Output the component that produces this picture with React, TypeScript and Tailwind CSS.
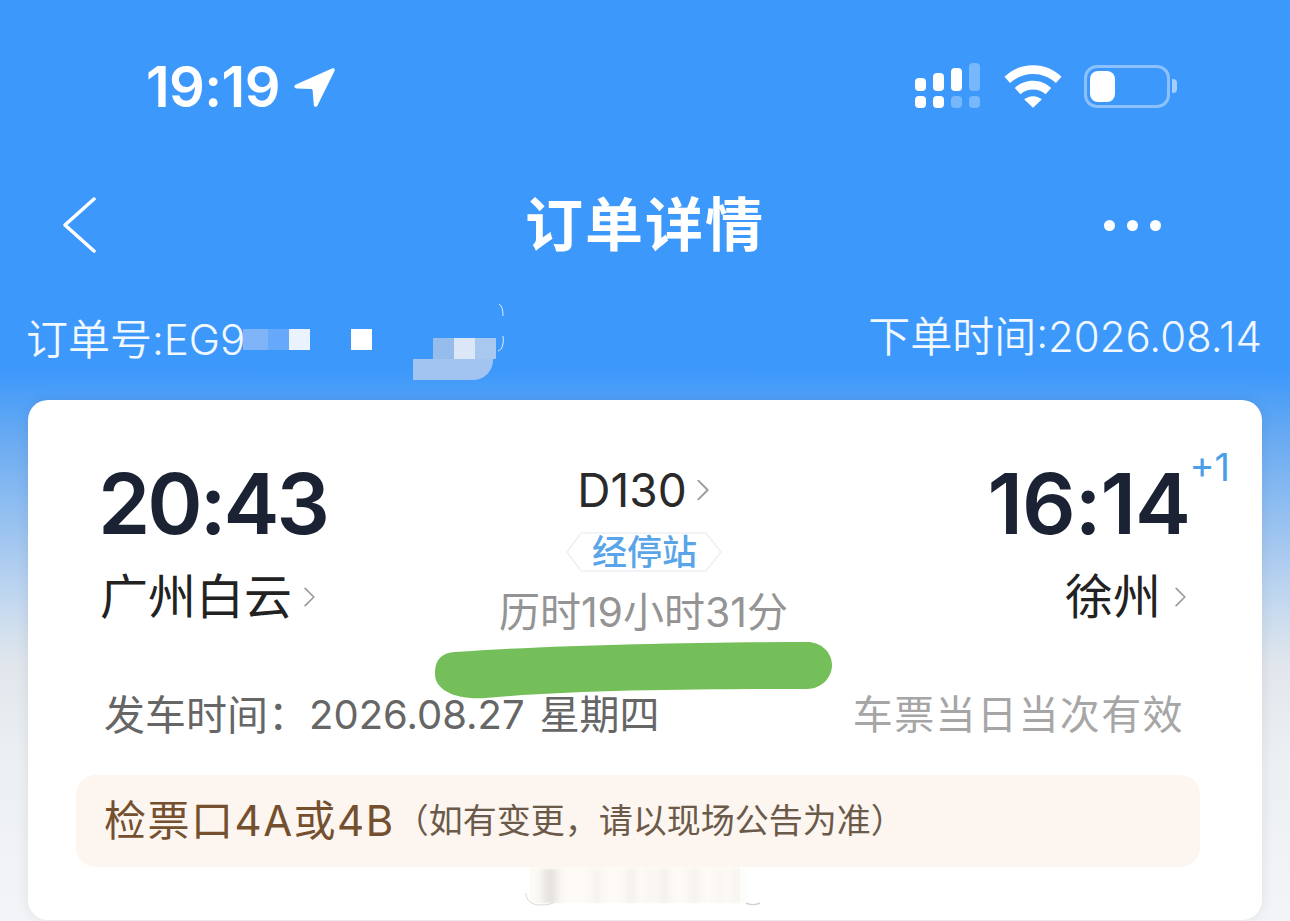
const F = '"Inter","Noto Sans CJK SC",sans-serif';

function Chevron({ className }: { className: string }) {
  return (
    <svg viewBox="0 0 12 24" className={className} fill="none" stroke="currentColor" strokeWidth="1.6" strokeLinecap="round" strokeLinejoin="round">
      <path d="M2 4l8 8-8 8" />
    </svg>
  );
}

function Status() {
  return (
    <div className="flex items-center justify-between pl-[146px] pr-[113px] pt-[62px] h-[112px]">
      <div className="flex items-center gap-[13px]">
        <span className="text-[56px] leading-[54px] font-semibold text-white tracking-[-0.6px]">19:19</span>
        <svg viewBox="0 0 42 40" className="w-[42px] h-[40px]" fill="white">
          <path d="M39 1.5 3 17.5c-2.5 1.2-2 3.8.7 3.900l14.500.5c.8 0 1.300.5 1.400 1.300l1.200 14.500c.2 2.400 2.800 2.900 3.800.6L41.500 4C42.300 2 41 .7 39 1.500Z" />
        </svg>
      </div>
      <div className="flex items-center gap-[23px] mt-[-2px]">
        <svg viewBox="0 0 66 46" className="w-[66px] h-[46px]" fill="white">
          <rect x="0" y="15" width="11" height="13" rx="4" />
          <rect x="18" y="10" width="11" height="18" rx="4" />
          <rect x="36" y="5" width="11" height="23" rx="4" />
          <rect x="54" y="0" width="11" height="28" rx="4" fillOpacity=".3" />
          <rect x="0" y="33" width="11" height="12" rx="4" />
          <rect x="18" y="33" width="11" height="12" rx="4" />
          <rect x="36" y="33" width="11" height="12" rx="4" fillOpacity=".3" />
          <rect x="54" y="33" width="11" height="12" rx="4" fillOpacity=".3" />
        </svg>
        <svg viewBox="0 0 60 44" className="w-[58px] h-[43px]" fill="white">
          <path d="M30 0C18 0 8 4.500.5 12l5.800 6.500C12.500 12.500 20.500 9 30 9s17.500 3.500 23.700 9.500L59.500 12C52 4.500 42 0 30 0Z" />
          <path d="M30 16c-7.500 0-14 2.800-18.800 7.500l5.800 6.400C20.300 26.800 25 25 30 25s9.700 1.800 13 4.900l5.800-6.400C44 18.800 37.500 16 30 16Z" />
          <path d="M30 32c-3.800 0-7 1.300-9 3.500L30 44l9-8.500C37 33.300 33.800 32 30 32Z" />
        </svg>
        <div className="flex items-center gap-[2px] ml-[-1px]">
          <div className="w-[86px] h-[43px] rounded-[13px] border-[3px] border-[#8cc1fb] p-[3px]">
            <div className="w-[25px] h-full rounded-[8px] bg-white" />
          </div>
          <div className="w-[5px] h-[14px] rounded-r-[4px] bg-[#a4cefc]" />
        </div>
      </div>
    </div>
  );
}

function Pixel({ className }: { className: string }) {
  return <span className={`block w-[21px] h-[21px] ${className}`} />;
}

function Smudge() {
  const bars = [
    [543, 14, 0.18],
    [593, 8, 0.07],
    [627, 8, 0.09],
    [647, 6, 0.06],
    [660, 8, 0.09],
    [690, 8, 0.08],
    [717, 6, 0.05],
    [733, 6, 0.07],
  ];
  return (
    <svg viewBox="0 0 260 46" className="absolute left-[492px] top-[465px] w-[260px] h-[46px]">
      <defs>
        <filter id="b" x="-100%" width="300%">
          <feGaussianBlur stdDeviation="4 1" />
        </filter>
      </defs>
      <rect x="10" y="2" width="210" height="36" fill="#fefaf6" />
      <g filter="url(#b)">
        {bars.map(([x, w, o]) => (
          <rect key={x} x={x - 520} y="4" width={w} height="34" fill="#777777" fillOpacity={o} />
        ))}
      </g>
      <path d="M6 28c0 8 6 12 14 12s12-1 14-3" fill="none" stroke="#d8d8d8" strokeWidth="1" />
      <path d="M226 38c4 2 10 2 14 0" fill="none" stroke="#d2d2d2" strokeWidth="1.500" />
    </svg>
  );
}

export default function App() {
  return (
    <div className="w-[1290px] h-[921px] overflow-hidden bg-[linear-gradient(180deg,#3d98fb_0px,#3d98fb_370px,#6aabf2_440px,#a5c8f0_547px,#c9dbef_613px,#e0e6ec_663px,#ecf0f3_760px,#f3f4f7_921px)]" style={{ fontFamily: F }}>
      <Status />
      <div className="grid grid-cols-[1fr_auto_1fr] items-center px-[62px] h-[80px] mt-[73px]">
        <svg viewBox="0 0 34 56" className="w-[34px] h-[56px] text-white" fill="none" stroke="currentColor" strokeWidth="3.500" strokeLinecap="round" strokeLinejoin="round">
          <path d="M32 2 3 28l29 26" />
        </svg>
        <h1 className="text-[58px] leading-[64px] font-bold text-white tracking-[2px]">订单详情</h1>
        <div className="flex justify-end gap-[12px] pr-[67px]">
          <span className="w-[11px] h-[11px] rounded-full bg-white" />
          <span className="w-[11px] h-[11px] rounded-full bg-white" />
          <span className="w-[11px] h-[11px] rounded-full bg-white" />
        </div>
      </div>
      <div className="flex items-center justify-between pl-[26px] pr-[28px] mt-[47px] h-[52px] text-[42px] font-[350] text-[#f2f8ff]">
        <div className="flex items-center mt-[2px]">
          <span className="whitespace-nowrap">订单号:EG9</span>
          <div className="relative flex items-center ml-[-2px]">
            <Pixel className="w-[25px] bg-[#7fb5f8]" />
            <Pixel className="bg-[#66a8f9]" />
            <Pixel className="bg-[#eaf3fd]" />
            <span className="w-[41px]" />
            <Pixel className="bg-white" />
            <span className="w-[41px]" />
            <div className="relative w-[84px] h-[42px] mt-[20px] mb-[-20px]">
              <div className="absolute left-[20px] top-0 flex">
                <Pixel className="bg-[#95bceb]" />
                <Pixel className="bg-[#dbe7f7]" />
                <Pixel className="bg-[#a9c8f0]" />
              </div>
              <div className="absolute left-0 top-[21px] w-[80px] h-[21px] rounded-br-[20px] bg-[#a1c5f0]" />
            </div>
            <svg viewBox="0 0 8 50" className="absolute right-[-9px] top-[-14px] w-[8px] h-[50px]" fill="none" stroke="#e6f0fb" strokeWidth="1">
              <path d="M1 0c3 2 4 6 4 12" />
              <path d="M5 32c1 8-1 14-5 15" />
            </svg>
          </div>
        </div>
        <span className="whitespace-nowrap mt-[-4px]">下单时间:2026.08.14</span>
      </div>

      <div className="relative mx-[28px] mt-[36px] h-[520px] rounded-[20px] bg-white shadow-[0_0_14px_rgba(0,0,0,0.08)]">
        <div className="relative grid grid-cols-[1fr_auto_1fr] pl-[72px] pr-[75px] pt-[60px]">
          <div>
            <div className="text-[84px] leading-[88px] font-semibold text-[#1b2233] tracking-[-3px] ml-[-2px]">20:43</div>
            <div className="flex items-center gap-[11px] text-[48px] leading-[60px] text-[#222222] mt-[19px]">
              广州白云<Chevron className="w-[13px] h-[26px] text-[#9b9b9b]" />
            </div>
          </div>
          <div className="flex flex-col items-center">
            <div className="flex items-center gap-[9px] text-[46px] leading-[60px] text-[#2a2a2a]">
              D130<Chevron className="w-[14px] h-[28px] text-[#9b9b9b]" />
            </div>
            <div className="relative mt-[12px] ml-[2px] w-[158px] h-[40px] flex items-center justify-center text-[35px] leading-[40px] font-medium text-[#5aa5e8]">
              <svg viewBox="0 0 158 40" className="absolute inset-0 w-[158px] h-[40px]" fill="none" stroke="#eef0f3" strokeWidth="1.500">
                <path d="M16 1h125l15 19-15 19H16L2 20 16 1Z" />
              </svg>
              <span className="relative">经停站</span>
            </div>
            <div className="mt-[18px] text-[41px] leading-[44px] text-[#949494] whitespace-nowrap">历时19小时31分</div>
          </div>
          <div className="relative flex flex-col items-end">
            <div className="text-[84px] leading-[88px] font-semibold text-[#1b2233] tracking-[-1px] mr-[-3px]">16:14</div>
            <span className="absolute right-[-43px] top-[-16px] text-[38px] leading-[46px] text-[#4b9fe8]">+1</span>
            <div className="flex items-center gap-[13px] text-[48px] leading-[60px] text-[#222222] mt-[19px]">
              徐州<Chevron className="w-[13px] h-[26px] text-[#9b9b9b]" />
            </div>
          </div>
        </div>
        <div className="flex items-center justify-between pl-[76px] pr-[78px] mt-[56px] leading-[50px]">
          <div className="flex items-center whitespace-nowrap text-[#666666]">
            <span className="text-[41px]">发车时间：</span>
            <span className="text-[40px]">2026.08.27</span>
            <span className="text-[40px] ml-[15px]">星期四</span>
          </div>
          <span className="text-[40px] text-[#a6a6a6] tracking-[1.4px]">车票当日当次有效</span>
        </div>
        <div className="ml-[48px] mr-[62px] mt-[35px] h-[92px] rounded-[20px] bg-[#fdf5ef] flex items-center px-[28px]">
          <span className="text-[42px] leading-[50px] whitespace-nowrap text-[#74502f] tracking-[1.5px]">检票口4A或4B</span>
          <span className="text-[34px] leading-[50px] whitespace-nowrap text-[#6b5a4a]">（如有变更，请以现场公告为准）</span>
        </div>
        <Smudge />
        <svg viewBox="0 0 398 58" className="absolute left-[407px] top-[242px] w-[398px] h-[58px]" fill="#74bf59">
          <path d="M20 10C120 3 260 0 372 0c14 0 25 10 25 23s-11 24-25 24C260 47 140 48 50 56 20 58 0 48 0 32S8 11 20 10Z" />
        </svg>
      </div>
    </div>
  );
}
